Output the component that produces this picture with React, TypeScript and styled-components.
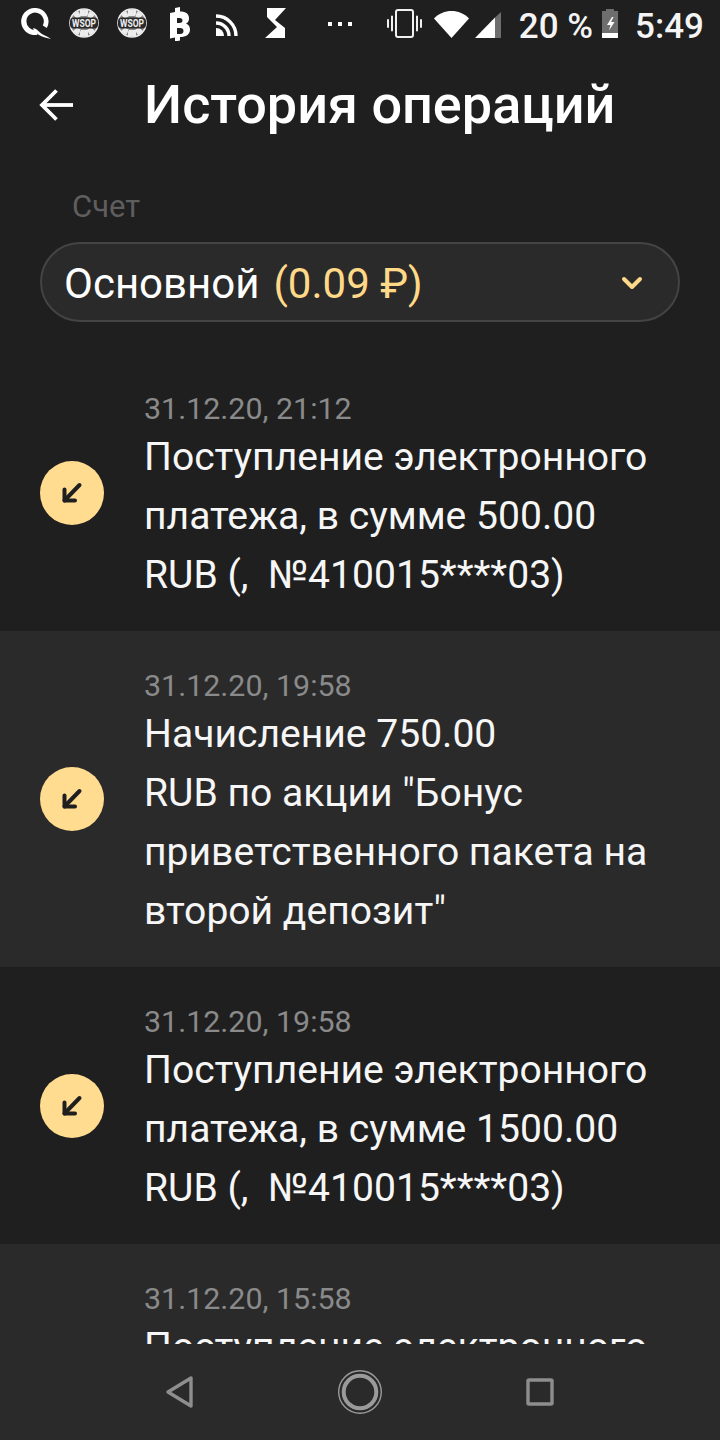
import React from "react";
import styled, { createGlobalStyle } from "styled-components";

const Global = createGlobalStyle`
  html, body { margin: 0; padding: 0; background: #1f1f1f; }
  * { box-sizing: border-box; }
`;

const Screen = styled.div`
  width: 720px;
  height: 1440px;
  display: flex;
  flex-direction: column;
  background: #1f1f1f;
  color: #fff;
  font-family: Roboto, "Noto Sans", sans-serif;
  overflow: hidden;
`;

const StatusBar = styled.div`
  height: 53px;
  flex: none;
  display: flex;
  align-items: flex-end;
  padding: 0 16px 15px 21px;
`;

const StatusLeft = styled.div`
  display: flex;
  align-items: flex-end;
  flex: 1;
`;

const StatusSlot = styled.span<{ $w: number; $ml?: number; $mb?: number }>`
  width: ${(p) => p.$w}px;
  margin-left: ${(p) => p.$ml ?? 0}px;
  margin-bottom: ${(p) => p.$mb ?? 0}px;
  flex: none;
  display: flex;
  align-items: flex-end;
  justify-content: center;

  svg {
    display: block;
    flex: none;
  }
`;

const StatusText = styled.span<{ $ml: number }>`
  margin-left: ${(p) => p.$ml}px;
  margin-bottom: -1px;
  font-size: 35px;
  font-weight: 500;
  line-height: 24px;
  white-space: nowrap;
  color: #f4f4f4;
`;

const Header = styled.header`
  height: 104px;
  flex: none;
  display: flex;
  align-items: center;
  padding-left: 39px;
`;

const BackButton = styled.span`
  width: 105px;
  flex: none;
  display: flex;
  align-items: center;
`;

const Title = styled.h1`
  margin: 0;
  font-size: 54px;
  font-weight: 500;
  line-height: 60px;
  color: #fff;
`;

const AccountSection = styled.section`
  flex: none;
  padding: 32px 40px;
`;

const FieldLabel = styled.div`
  padding-left: 32px;
  font-size: 31px;
  line-height: 36px;
  color: #5e5e5e;
`;

const Select = styled.div`
  margin-top: 17px;
  height: 80px;
  display: flex;
  align-items: center;
  justify-content: space-between;
  padding: 2px 35px 0 22px;
  background: #2a2a2a;
  border: 2px solid #444;
  border-radius: 40px;
  font-size: 42px;
`;

const SelectValue = styled.span`
  color: #fff;
`;

const Balance = styled.span`
  margin-left: 14px;
  color: #ffd988;
`;

const List = styled.div`
  flex: 1;
  min-height: 0;
  overflow: hidden;
`;

const Row = styled.div<{ $alt: boolean }>`
  display: flex;
  align-items: center;
  min-height: 277px;
  padding: 0 0 0 40px;
  background: ${(p) => (p.$alt ? "#2a2a2a" : "#1f1f1f")};
`;

const IconCircle = styled.span`
  width: 64px;
  height: 64px;
  flex: none;
  border-radius: 50%;
  background: #ffdc8f;
  display: flex;
  align-items: center;
  justify-content: center;
  margin-right: 40px;
`;

const RowBody = styled.div`
  min-width: 0;
  align-self: flex-start;
  padding: 35px 0 26px;
`;

const RowDate = styled.div`
  font-size: 30.4px;
  line-height: 39px;
  color: #8a8a8a;
`;

const RowText = styled.div`
  font-size: 39.1px;
  line-height: 59px;
  color: #f6f6f6;
  white-space: pre-wrap;
`;

const NavBar = styled.nav`
  height: 96px;
  flex: none;
  background: #2a2a2a;
  display: flex;
  align-items: center;
  justify-content: center;
`;

const NavItem = styled.span`
  width: 180px;
  display: flex;
  justify-content: center;
`;

const Qiwi = () => (
  <svg width="30" height="31" viewBox="0 0 30 31">
    <path d="M13.5 0a13.5 13.5 0 1 0 3 26.7l-1-4.8a8.7 8.7 0 1 1 6.3-4.5l4 2.6A13.5 13.5 0 0 0 13.5 0z" fill="#fff" />
    <path d="M12 20c3 0 6 4 9 6 3 2 6 2.500 9 5-4-1-8-1.500-12-4-3-2-5-4-6-7z" fill="#fff" />
  </svg>
);

const Wsop = () => (
  <svg width="30" height="30" viewBox="0 0 30 30">
    <circle cx="15" cy="15" r="14" fill="#8a8a8a" stroke="#ececec" strokeWidth="1.6" />
    <path d="M11 2h8v6h-8zM11 22h8v6h-8zM4 6.500l5-3.500 3 5-4 3zM26 6.500l-5-3.500-3 5 4 3zM4 23.500l5 3.500 3-5-4-3zM26 23.500l-5 3.500-3-5 4-3z" fill="#ececec" />
    <rect x="1" y="9.500" width="28" height="11" rx="4" fill="#2a2a2a" />
    <text x="15" y="19" textAnchor="middle" fontSize="10" fontWeight="700" fontFamily="Roboto" fill="#efefef" textLength="24" lengthAdjust="spacingAndGlyphs">WSOP</text>
  </svg>
);

const BLogo = () => (
  <svg width="20" height="34" viewBox="0 0 20 34">
    <path fillRule="evenodd" fill="#fff" d="M0 6l5-1V1l5-1v4.500c6 0 9 2.500 9 7 0 2.500-1 4-3 5 2.500 1 4 3 4 6 0 5-4 7.500-10 7.500v3.500l-5 1v-4l-5 1zM7 11v5h2.500c2 0 3-1 3-2.500s-1-2.500-3-2.500zM7 21v6h3c2.500 0 3.500-1 3.500-3s-1-3-3.500-3z" />
  </svg>
);

const Rss = () => (
  <svg width="22" height="22" viewBox="0 0 22 22" fill="none" stroke="#fff">
    <path d="M0 14a8 8 0 0 1 8 8H0z" fill="#fff" stroke="none" />
    <path d="M0 9a13 13 0 0 1 13 13" strokeWidth="3.4" />
    <path d="M0 2a20 20 0 0 1 20 20" strokeWidth="3.4" />
  </svg>
);

const SLogo = () => (
  <svg width="21" height="30" viewBox="0 0 21 30">
    <path fill="#fff" d="M2 0H21L10 12 20 20V30H0L12 19 2 9z" />
  </svg>
);

const Dots = () => (
  <svg width="24" height="4" viewBox="0 0 24 4" fill="#fff">
    <rect x="0" y="0" width="4" height="4" />
    <rect x="10" y="0" width="4" height="4" />
    <rect x="20" y="0" width="4" height="4" />
  </svg>
);

const Vibrate = () => (
  <svg width="35" height="29" viewBox="0 0 35 29" fill="none" stroke="#f0f0f0" strokeLinecap="round" strokeWidth="2">
    <rect x="9" y="1" width="17" height="27" rx="2" />
    <path d="M5 7.500v14M30 7.500v14" />
    <path d="M1 11v7M34 11v7" />
  </svg>
);

const Wifi = () => (
  <svg width="35" height="27" viewBox="0 0 35 27">
    <path fill="#fff" d="M0 7.500C4.500 2.500 11 0 17.500 0S30.500 2.500 35 7.500L17.500 27z" />
  </svg>
);

const Signal = () => (
  <svg width="26" height="26" viewBox="0 0 26 26">
    <path fill="#fff" d="M0 26L20 5.500V26z" />
    <path fill="#6e6e6e" d="M20 5.500L26 0v26h-6z" />
  </svg>
);

const Battery = () => (
  <svg width="16" height="29" viewBox="0 0 16 29">
    <path fill="#6e6e6e" d="M4 2V0h8v2h4v27H0V2z" />
    <rect y="24" width="16" height="5" fill="#fff" />
    <path fill="#fff" d="M10 8L5 16h3.500L7 21.500 12.500 13H9l2.500-5z" />
  </svg>
);

const ArrowDownLeft = () => (
  <svg width="24" height="24" viewBox="0 0 24 24" fill="none" stroke="#1f1f1f" strokeWidth="4" strokeLinecap="round" strokeLinejoin="round">
    <path d="M19.500 4L4.500 19.500" />
    <path d="M4.500 8.500v11H15" />
  </svg>
);

const BackArrow = () => (
  <svg width="34" height="32" viewBox="0 0 34 32" fill="none" stroke="#fff" strokeWidth="3.8">
    <path d="M34 16H3" />
    <path d="M17.500 1.500L3 16l14.500 14.500" />
  </svg>
);

const Chevron = () => (
  <svg width="22" height="15" viewBox="0 0 22 15" fill="none" stroke="#ffd988" strokeWidth="4" strokeLinecap="round" strokeLinejoin="round">
    <path d="M3 3l8 8 8-8" />
  </svg>
);

const items = [
  { date: "31.12.20, 21:12", lines: ["Поступление электронного", "платежа, в сумме 500.00", "RUB (,  №410015****03)"] },
  { date: "31.12.20, 19:58", lines: ["Начисление 750.00", 'RUB по акции "Бонус', "приветственного пакета на", 'второй депозит"'] },
  { date: "31.12.20, 19:58", lines: ["Поступление электронного", "платежа, в сумме 1500.00", "RUB (,  №410015****03)"] },
  { date: "31.12.20, 15:58", lines: ["Поступление электронного"] },
];

export default function App() {
  return (
    <Screen>
      <Global />
      <StatusBar>
        <StatusLeft>
          <StatusSlot $w={30} $mb={-1}><Qiwi /></StatusSlot>
          <StatusSlot $w={30} $ml={18}><Wsop /></StatusSlot>
          <StatusSlot $w={30} $ml={18}><Wsop /></StatusSlot>
          <StatusSlot $w={20} $ml={23} $mb={-3}><BLogo /></StatusSlot>
          <StatusSlot $w={22} $ml={26} $mb={2}><Rss /></StatusSlot>
          <StatusSlot $w={21} $ml={27}><SLogo /></StatusSlot>
          <StatusSlot $w={24} $ml={42} $mb={12}><Dots /></StatusSlot>
        </StatusLeft>
        <StatusSlot $w={35}><Vibrate /></StatusSlot>
        <StatusSlot $w={35} $ml={12}><Wifi /></StatusSlot>
        <StatusSlot $w={26} $ml={6}><Signal /></StatusSlot>
        <StatusText $ml={18}>20 %</StatusText>
        <StatusSlot $w={16} $ml={9}><Battery /></StatusSlot>
        <StatusText $ml={17}>5:49</StatusText>
      </StatusBar>
      <Header>
        <BackButton><BackArrow /></BackButton>
        <Title>История операций</Title>
      </Header>
      <AccountSection>
        <FieldLabel>Счет</FieldLabel>
        <Select>
          <span>
            <SelectValue>Основной</SelectValue>
            <Balance>(0.09 ₽)</Balance>
          </span>
          <Chevron />
        </Select>
      </AccountSection>
      <List>
        {items.map((it, i) => (
          <Row key={i} $alt={i % 2 === 1}>
            <IconCircle><ArrowDownLeft /></IconCircle>
            <RowBody>
              <RowDate>{it.date}</RowDate>
              <RowText>
                {it.lines.map((l) => (
                  <div key={l}>{l}</div>
                ))}
              </RowText>
            </RowBody>
          </Row>
        ))}
      </List>
      <NavBar>
        <NavItem>
          <svg width="30" height="34" viewBox="0 0 30 34" fill="none" stroke="#8e8e8e" strokeWidth="3.4" strokeLinejoin="round">
            <path d="M26 3v28L3 17z" />
          </svg>
        </NavItem>
        <NavItem>
          <svg width="44" height="44" viewBox="0 0 44 44" fill="none" stroke="#9a9a9a">
            <circle cx="22" cy="22" r="21.3" strokeWidth="1.4" />
            <circle cx="22" cy="22" r="16.3" strokeWidth="4" />
          </svg>
        </NavItem>
        <NavItem>
          <svg width="28" height="28" viewBox="0 0 28 28" fill="none" stroke="#8e8e8e" strokeWidth="3.4" strokeLinejoin="round">
            <rect x="2" y="2" width="24" height="24" rx="1" />
          </svg>
        </NavItem>
      </NavBar>
    </Screen>
  );
}
